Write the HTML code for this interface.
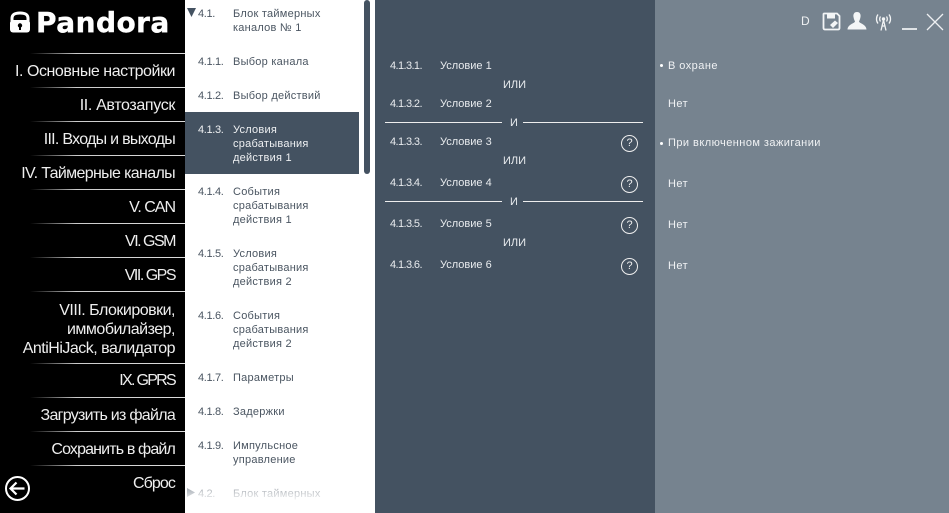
<!DOCTYPE html>
<html><head><meta charset="utf-8">
<style>
html,body{margin:0;padding:0}
body{width:949px;height:513px;overflow:hidden;position:relative;background:#76838f;font-family:"Liberation Sans",sans-serif}
div{position:absolute;white-space:nowrap}
.side{left:0;top:0;width:185px;height:513px;background:#000}
.m{right:774px;color:#eee;font-size:16px;line-height:18px;text-align:right;letter-spacing:-.5px;margin-top:1px}
.hr{left:30px;width:155px;height:1px;background:linear-gradient(90deg,#000,#ccc 30%,#ddd)}
.n{font-size:11px;color:#4a5561;line-height:14px;letter-spacing:-.35px;margin-top:1px}
.t{font-size:11px;color:#4a5561;line-height:14px;left:233px;letter-spacing:.25px;margin-top:1px}
.w{color:#eef0f2}
.c{font-size:11px;color:#e8ebee;line-height:14px;margin-top:1px}
.cn{left:390px;letter-spacing:-.6px}.ct{left:440px}
.or{left:503px;font-size:11px;color:#e8ebee;line-height:14px;margin-top:1px}
.q{left:621px;width:15px;height:15px;border:1px solid #eee;border-radius:50%;color:#eee;font-size:11px;line-height:15px;text-align:center}
.l{height:1px;background:#eee;top:0}
.v{left:668px;font-size:11px;color:#f0f2f4;line-height:14px;letter-spacing:.45px;margin-top:1px}
.dot{left:660px;width:3px;height:3px;border-radius:50%;background:#fff}
</style></head><body>
<div class="side"></div>
<svg style="position:absolute;left:9px;top:10px" width="22" height="24" viewBox="0 0 22 24"><path d="M3 11V8.500C3 4 6.500 3 11 3S19 4 19 8.500V11" fill="none" stroke="#fff" stroke-width="3"/><rect x="1" y="10" width="20" height="12.500" rx="3" fill="#fff"/><circle cx="11" cy="15.500" r="2.200" fill="#000"/><rect x="10" y="16" width="2" height="4" fill="#000"/></svg>
<div style="left:36px;top:6px;font-family:'DejaVu Sans',sans-serif;font-size:28px;line-height:33px;font-weight:bold;color:#fff;letter-spacing:.45px;-webkit-text-stroke:.4px #fff">Pandora</div>

<div class="hr" style="top:53px"></div>
<div class="m" style="top:62px;letter-spacing:-.45px">I. Основные настройки</div>
<div class="hr" style="top:87px"></div>
<div class="m" style="top:96px;letter-spacing:-.35px">II. Автозапуск</div>
<div class="hr" style="top:121px"></div>
<div class="m" style="top:130px;letter-spacing:-.72px">III. Входы и выходы</div>
<div class="hr" style="top:155px"></div>
<div class="m" style="top:164px;letter-spacing:-.65px">IV. Таймерные каналы</div>
<div class="hr" style="top:189px"></div>
<div class="m" style="top:198px;letter-spacing:-1px">V. CAN</div>
<div class="hr" style="top:223px"></div>
<div class="m" style="top:232px;letter-spacing:-1.5px">VI. GSM</div>
<div class="hr" style="top:257px"></div>
<div class="m" style="top:266px;letter-spacing:-1.5px">VII. GPS</div>
<div class="hr" style="top:291px"></div>
<div class="m" style="top:300px;line-height:19px">VIII. Блокировки,<br>иммобилайзер,<br>AntiHiJack, валидатор</div>
<div class="hr" style="top:363px"></div>
<div class="m" style="top:371px;letter-spacing:-1.7px">IX. GPRS</div>
<div class="hr" style="top:397px"></div>
<div class="m" style="top:406px;letter-spacing:-.72px">Загрузить из файла</div>
<div class="hr" style="top:431px"></div>
<div class="m" style="top:440px;letter-spacing:-.85px">Сохранить в файл</div>
<div class="hr" style="top:465px"></div>
<div class="m" style="top:474px;letter-spacing:-.9px">Сброс</div>
<svg style="position:absolute;left:4px;top:475px" width="27" height="27" viewBox="0 0 27 27"><circle cx="13.500" cy="13.500" r="11.500" fill="none" stroke="#fff" stroke-width="2"/><path d="M20.500 13.500H7M12.500 7.500L6.500 13.500L12.500 19.500" fill="none" stroke="#fff" stroke-width="2.200"/></svg>

<div style="left:185px;top:0;width:190px;height:513px;background:#fff"></div>
<div style="left:185px;top:112px;width:174px;height:62px;background:#445261"></div>
<div style="left:364px;top:0;width:6px;height:174px;background:#445261;border-radius:3px"></div>

<svg style="position:absolute;left:187px;top:8px" width="10" height="9"><path d="M0 0H9L4.500 9Z" fill="#445261"/></svg>
<div class="n" style="left:198px;top:6px">4.1.</div><div class="t" style="top:6px">Блок таймерных<br>каналов № 1</div>
<div class="n" style="left:198px;top:54px">4.1.1.</div><div class="t" style="top:54px">Выбор канала</div>
<div class="n" style="left:198px;top:88px">4.1.2.</div><div class="t" style="top:88px">Выбор действий</div>
<div class="n w" style="left:198px;top:122px">4.1.3.</div><div class="t w" style="top:122px">Условия<br>срабатывания<br>действия 1</div>
<div class="n" style="left:198px;top:184px">4.1.4.</div><div class="t" style="top:184px">События<br>срабатывания<br>действия 1</div>
<div class="n" style="left:198px;top:246px">4.1.5.</div><div class="t" style="top:246px">Условия<br>срабатывания<br>действия 2</div>
<div class="n" style="left:198px;top:308px">4.1.6.</div><div class="t" style="top:308px">События<br>срабатывания<br>действия 2</div>
<div class="n" style="left:198px;top:370px">4.1.7.</div><div class="t" style="top:370px">Параметры</div>
<div class="n" style="left:198px;top:404px">4.1.8.</div><div class="t" style="top:404px">Задержки</div>
<div class="n" style="left:198px;top:438px">4.1.9.</div><div class="t" style="top:438px">Импульсное<br>управление</div>
<svg style="position:absolute;left:187px;top:488px" width="9" height="10"><path d="M0 0V9L8 4.500Z" fill="#445261"/></svg>
<div class="n" style="left:198px;top:486px">4.2.</div><div class="t" style="top:486px">Блок таймерных</div>
<div style="left:185px;top:470px;width:190px;height:43px;background:linear-gradient(rgba(255,255,255,0),rgba(255,255,255,.9) 70%,#fff)"></div>

<div style="left:375px;top:0;width:280px;height:513px;background:#445261"></div>
<div class="c cn" style="top:58px">4.1.3.1.</div><div class="c ct" style="top:58px">Условие 1</div>
<div class="or" style="top:77px">ИЛИ</div>
<div class="c cn" style="top:96px">4.1.3.2.</div><div class="c ct" style="top:96px">Условие 2</div>
<div class="l" style="left:385px;top:122px;width:117px"></div><div class="or" style="left:510px;top:115px">И</div><div class="l" style="left:523px;top:122px;width:120px"></div>
<div class="c cn" style="top:134px">4.1.3.3.</div><div class="c ct" style="top:134px">Условие 3</div>
<div class="q" style="top:135px">?</div>
<div class="or" style="top:153px">ИЛИ</div>
<div class="c cn" style="top:175px">4.1.3.4.</div><div class="c ct" style="top:175px">Условие 4</div>
<div class="q" style="top:176px">?</div>
<div class="l" style="left:385px;top:201px;width:117px"></div><div class="or" style="left:510px;top:194px">И</div><div class="l" style="left:523px;top:201px;width:120px"></div>
<div class="c cn" style="top:216px">4.1.3.5.</div><div class="c ct" style="top:216px">Условие 5</div>
<div class="q" style="top:217px">?</div>
<div class="or" style="top:235px">ИЛИ</div>
<div class="c cn" style="top:257px">4.1.3.6.</div><div class="c ct" style="top:257px">Условие 6</div>
<div class="q" style="top:258px">?</div>

<div class="dot" style="top:64px"></div><div class="v" style="top:58px">В охране</div>
<div class="v" style="top:96px">Нет</div>
<div class="dot" style="top:142px"></div><div class="v" style="top:135px">При включенном зажигании</div>
<div class="v" style="top:176px">Нет</div>
<div class="v" style="top:217px">Нет</div>
<div class="v" style="top:258px">Нет</div>

<div style="left:801px;top:14px;font-size:12px;line-height:14px;color:#eef0f2">D</div>
<svg style="position:absolute;left:822px;top:12px" width="19" height="19" viewBox="0 0 19 19"><path d="M2 1.500H15L17.500 4V16C17.500 17 17 17.500 16 17.500H3C2 17.500 1.500 17 1.500 16V2Z" fill="none" stroke="#f2f4f5" stroke-width="1.800"/><rect x="5" y="1.500" width="8" height="5" fill="#f2f4f5"/><path d="M8 13L13 8.500L16 11L11 16Z" fill="#f2f4f5"/></svg>
<svg style="position:absolute;left:847px;top:12px" width="20" height="18" viewBox="0 0 20 18"><path d="M10 0C7 0 6 2.500 6.500 5C6.800 7 7.500 8.500 8 9.500C7.500 11.500 1 12 0.500 17.500H19.500C19 12 12.500 11.500 12 9.500C12.500 8.500 13.200 7 13.500 5C14 2.500 13 0 10 0Z" fill="#f4f6f7"/></svg>
<svg style="position:absolute;left:875px;top:13px" width="17" height="18" viewBox="0 0 17 18" fill="none" stroke="#f2f4f5" stroke-width="1.300"><circle cx="8.500" cy="6" r="1.700" fill="#f2f4f5" stroke="none"/><path d="M8.500 7L6 17.500M8.500 7L11 17.500M6.800 13H10.200"/><path d="M5.500 3.500C4.500 5 4.500 7 5.500 8.500M11.500 3.500C12.500 5 12.500 7 11.500 8.500M3 1.500C1 4 1 8 3 10.500M14 1.500C16 4 16 8 14 10.500"/></svg>
<div style="left:902px;top:28px;width:15px;height:2px;background:#dfe3e6"></div>
<svg style="position:absolute;left:926px;top:13px" width="18" height="18" viewBox="0 0 18 18"><path d="M1 1L17 17M17 1L1 17" stroke="#eef0f2" stroke-width="1.300" fill="none"/></svg>
</body></html>
